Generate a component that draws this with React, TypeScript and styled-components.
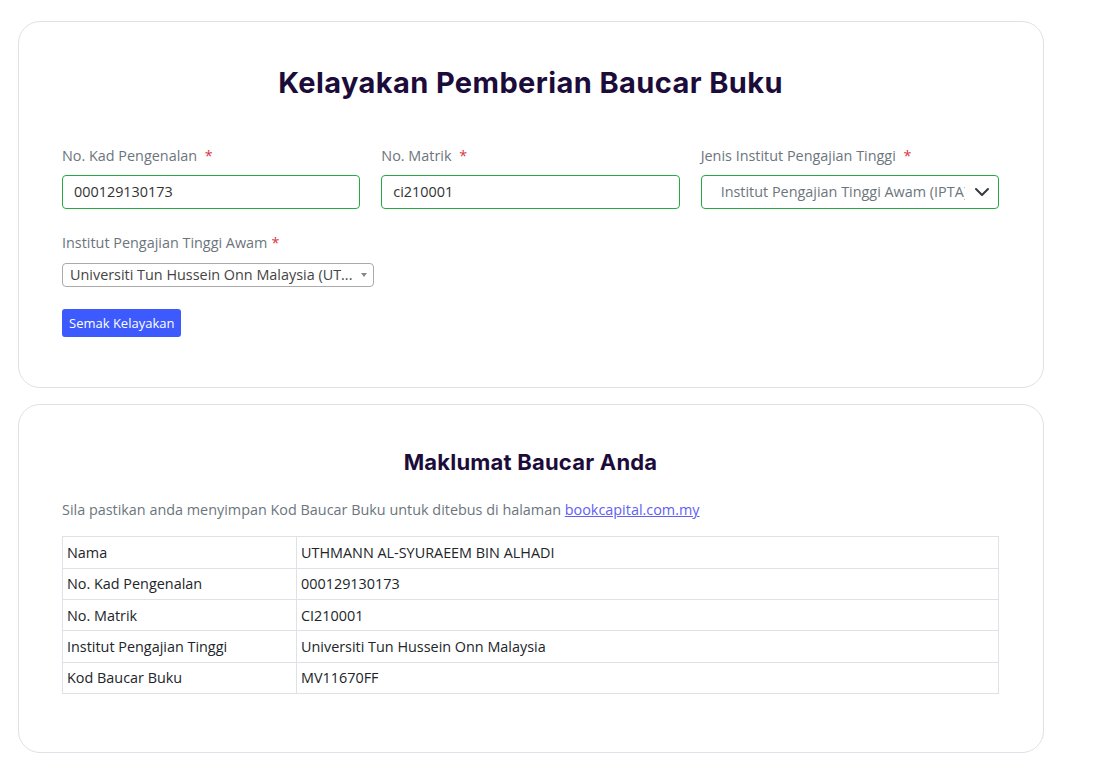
import React from "react";
import styled, { createGlobalStyle } from "styled-components";

const Global = createGlobalStyle`
  html, body { margin: 0; padding: 0; background: #fff; }
  body { font-family: "Open Sans", "Noto Sans", sans-serif; color: #212529; }
  * { box-sizing: border-box; }
`;

const Page = styled.div`
  padding: 21px 51px 30px 18px;
  display: flex;
  flex-direction: column;
  gap: 16px;
`;

const Card = styled.section<{ $pt: number; $pb: number }>`
  border: 1px solid #e1e0e8;
  border-radius: 22px;
  padding: ${(p) => p.$pt}px 44px ${(p) => p.$pb}px 43px;
  background: #fff;
`;

const Title = styled.h1<{ $size: number; $ls: number }>`
  margin: 0;
  text-align: center;
  font-family: "Inter", "Noto Sans", sans-serif;
  font-weight: 700;
  font-size: ${(p) => p.$size}px;
  line-height: 1.2;
  letter-spacing: ${(p) => p.$ls}px;
  color: #1c0c3a;
`;

const Grid = styled.div`
  margin-top: 44px;
  display: grid;
  grid-template-columns: repeat(3, minmax(0, 1fr));
  column-gap: 21px;
  row-gap: 23px;
`;

const Field = styled.div`
  display: flex;
  flex-direction: column;
  gap: 9px;
`;

const Label = styled.label`
  font-size: 14.4px;
  line-height: 21px;
  color: #6c757d;
`;

const Req = styled.span`
  color: #dc3545;
  margin-left: 4px;
`;

const Input = styled.div`
  height: 34px;
  border: 1px solid #28a745;
  border-radius: 4px;
  padding: 0 11px;
  display: flex;
  align-items: center;
  font-size: 14.4px;
  color: #333;
`;

const SelectBox = styled.div`
  height: 34px;
  border: 1px solid #28a745;
  border-radius: 4px;
  padding: 0 8px 0 19px;
  display: flex;
  align-items: center;
  gap: 9px;
  font-size: 14.4px;
  color: #6c757d;
`;

const SelectText = styled.span`
  flex: 1;
  white-space: nowrap;
  overflow: hidden;
`;

const SmallSelect = styled.div`
  width: 312px;
  height: 24px;
  margin-top: 1px;
  border: 1px solid #aaa;
  border-radius: 4px;
  padding: 0 6px 0 7px;
  display: flex;
  align-items: center;
  font-size: 14.4px;
  color: #444;
`;

const Caret = styled.span`
  width: 0;
  height: 0;
  border-left: 3px solid transparent;
  border-right: 3px solid transparent;
  border-top: 4px solid #888;
  margin-left: 8px;
`;

const Button = styled.button`
  margin-top: 22px;
  height: 28px;
  padding: 0 7px;
  border: none;
  border-radius: 3px;
  background: #3d5afe;
  color: #fff;
  font-family: "Open Sans", sans-serif;
  font-size: 13px;
  align-self: flex-start;
`;

const Form = styled.div`
  display: flex;
  flex-direction: column;
`;

const Note = styled.p`
  margin: 24px 0 16px;
  font-size: 14.4px;
  line-height: 21px;
  color: #6c757d;
`;

const Link = styled.a`
  color: #6160f5;
  text-decoration: underline;
`;

const Table = styled.table`
  width: 100%;
  border-collapse: collapse;
  font-size: 14.4px;
  color: #212529;
`;

const Td = styled.td<{ $w?: string }>`
  border: 1px solid #dee2e6;
  padding: 4.7px 4px;
  line-height: 21px;
  width: ${(p) => p.$w || "auto"};
`;

const rows: [string, string][] = [
  ["Nama", "UTHMANN AL-SYURAEEM BIN ALHADI"],
  ["No. Kad Pengenalan", "000129130173"],
  ["No. Matrik", "CI210001"],
  ["Institut Pengajian Tinggi", "Universiti Tun Hussein Onn Malaysia"],
  ["Kod Baucar Buku", "MV11670FF"],
];

export default function App() {
  return (
    <>
      <Global />
      <Page>
        <Card $pt={44} $pb={50}>
          <Title $size={29} $ls={0.4}>Kelayakan Pemberian Baucar Buku</Title>
          <Form>
            <Grid>
              <Field>
                <Label>
                  No. Kad Pengenalan <Req>*</Req>
                </Label>
                <Input>000129130173</Input>
              </Field>
              <Field>
                <Label>
                  No. Matrik <Req>*</Req>
                </Label>
                <Input>ci210001</Input>
              </Field>
              <Field>
                <Label>
                  Jenis Institut Pengajian Tinggi <Req>*</Req>
                </Label>
                <SelectBox>
                  <SelectText>Institut Pengajian Tinggi Awam (IPTA)</SelectText>
                  <svg width="16" height="16" viewBox="0 0 16 16" fill="none">
                    <path
                      d="M2 5l6 6 6-6"
                      stroke="#343a40"
                      strokeWidth="2"
                      strokeLinecap="round"
                      strokeLinejoin="round"
                    />
                  </svg>
                </SelectBox>
              </Field>
              <Field>
                <Label>
                  Institut Pengajian Tinggi Awam<Req>*</Req>
                </Label>
                <SmallSelect>
                  <SelectText>Universiti Tun Hussein Onn Malaysia (UT...</SelectText>
                  <Caret />
                </SmallSelect>
              </Field>
            </Grid>
            <Button>Semak Kelayakan</Button>
          </Form>
        </Card>
        <Card $pt={44} $pb={58}>
          <Title $size={22} $ls={0.2}>Maklumat Baucar Anda</Title>
          <Note>
            Sila pastikan anda menyimpan Kod Baucar Buku untuk ditebus di halaman{" "}
            <Link href="#">bookcapital.com.my</Link>
          </Note>
          <Table>
            <tbody>
              {rows.map(([k, v]) => (
                <tr key={k}>
                  <Td $w="25%">{k}</Td>
                  <Td>{v}</Td>
                </tr>
              ))}
            </tbody>
          </Table>
        </Card>
      </Page>
    </>
  );
}
